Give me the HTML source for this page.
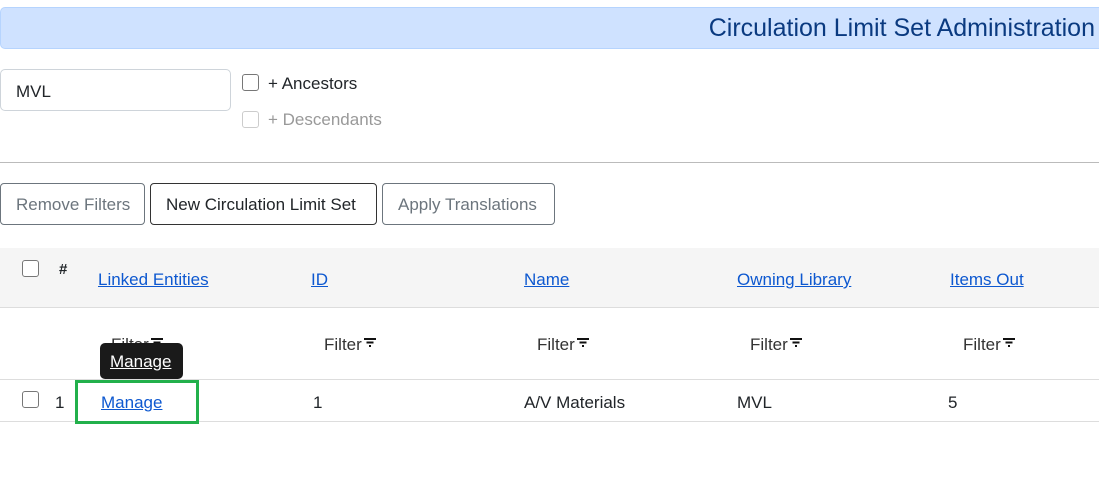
<!DOCTYPE html>
<html><head><meta charset="utf-8"><style>
body{margin:0;width:1099px;height:482px;overflow:hidden;background:#fff;font-family:"Liberation Sans",sans-serif;font-size:17px;color:#212529;position:relative}
.a{position:absolute}
.banner{left:0;top:7px;width:1105px;height:40px;background:#cfe2ff;border:1px solid #b6d4fe;border-radius:5px}
.banner span{position:absolute;right:11px;top:6px;font-size:25px;color:#0a3a80}
.cb{width:15px;height:15px;border:1.5px solid #777;border-radius:3px;background:#fff}
.btn{top:183px;height:42px;border:1px solid #6c757d;border-radius:4px;line-height:42px;padding:0 15px;font-size:17px;box-sizing:border-box;white-space:nowrap}
a{color:#0d58d0;text-decoration:underline}
.f{font-size:17px;color:#333}
.f svg{vertical-align:top;margin-top:3px;margin-left:1px}
</style></head><body>
<div class="a banner"><span>Circulation Limit Set Administration</span></div>
<div class="a" style="left:0;top:69px;width:231px;height:42px;border:1px solid #ced4da;border-radius:5px;box-sizing:border-box;padding:12px 15px">MVL</div>
<div class="a cb" style="left:242px;top:74px"></div>
<div class="a" style="left:268px;top:74px">+ Ancestors</div>
<div class="a cb" style="left:242px;top:111px;border-color:#ccc"></div>
<div class="a" style="left:268px;top:110px;color:#999">+ Descendants</div>
<div class="a" style="left:0;top:162px;width:1099px;height:1px;background:#bbb"></div>
<div class="a btn" style="left:0;width:145px;color:#6c757d">Remove Filters</div>
<div class="a btn" style="left:150px;width:227px;border-color:#333;color:#212529">New Circulation Limit Set</div>
<div class="a btn" style="left:382px;width:173px;color:#6c757d">Apply Translations</div>
<div class="a" style="left:0;top:248px;width:1099px;height:59px;background:#f5f5f5;border-bottom:1px solid #ddd"></div>
<div class="a cb" style="left:22px;top:260px"></div>
<div class="a" style="left:59px;top:261px;font-weight:bold;font-size:15px">#</div>
<a class="a" style="left:98px;top:270px">Linked Entities</a>
<a class="a" style="left:311px;top:270px">ID</a>
<a class="a" style="left:524px;top:270px">Name</a>
<a class="a" style="left:737px;top:270px">Owning Library</a>
<a class="a" style="left:950px;top:270px">Items Out</a>
<div class="a" style="left:0;top:379px;width:1099px;height:1px;background:#ddd"></div>
<div class="a" style="left:0;top:421px;width:1099px;height:1px;background:#ddd"></div>
<div class="a f" style="left:111px;top:335px">Filter<svg width="14" height="10"><path d="M1 1h12M3.5 4.5h7M6 8h2" stroke="#111" stroke-width="2"/></svg></div>
<div class="a f" style="left:324px;top:335px">Filter<svg width="14" height="10"><path d="M1 1h12M3.5 4.5h7M6 8h2" stroke="#111" stroke-width="2"/></svg></div>
<div class="a f" style="left:537px;top:335px">Filter<svg width="14" height="10"><path d="M1 1h12M3.5 4.5h7M6 8h2" stroke="#111" stroke-width="2"/></svg></div>
<div class="a f" style="left:750px;top:335px">Filter<svg width="14" height="10"><path d="M1 1h12M3.5 4.5h7M6 8h2" stroke="#111" stroke-width="2"/></svg></div>
<div class="a f" style="left:963px;top:335px">Filter<svg width="14" height="10"><path d="M1 1h12M3.5 4.5h7M6 8h2" stroke="#111" stroke-width="2"/></svg></div>
<div class="a" style="left:100px;top:343px;width:83px;height:36px;background:#1a1a1a;border-radius:5px"></div>
<div class="a" style="left:110px;top:352px;color:#fff;text-decoration:underline">Manage</div>
<div class="a cb" style="left:22px;top:391px"></div>
<div class="a" style="left:55px;top:393px">1</div>
<div class="a" style="left:75px;top:380px;width:118px;height:38px;border:3px solid #22b04b"></div>
<a class="a" style="left:101px;top:393px">Manage</a>
<div class="a" style="left:313px;top:393px">1</div>
<div class="a" style="left:524px;top:393px">A/V Materials</div>
<div class="a" style="left:737px;top:393px">MVL</div>
<div class="a" style="left:948px;top:393px">5</div>
</body></html>
